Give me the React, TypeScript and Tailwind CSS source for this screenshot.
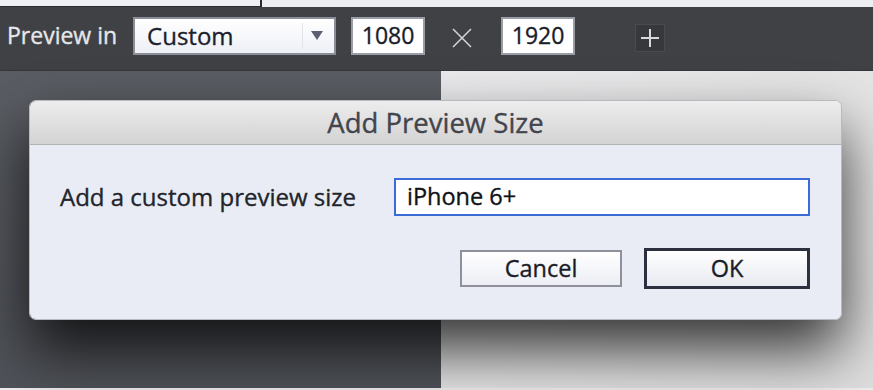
export default function App() {
  return (
    <div className="relative w-[873px] h-[390px] overflow-hidden bg-[#eeeeee] font-['Open_Sans',sans-serif] [-webkit-text-stroke:0.35px_currentColor]">
      {/* top strip */}
      <div className="flex h-[7px]">
        <div className="w-[262px] h-[7px] bg-[#eef0f4] border-r-2 border-b border-[#2a2b2e]" />
        <div className="flex-1 bg-[#eceef2]" />
      </div>

      {/* toolbar */}
      <div className="flex items-center h-[64px] pl-[7px] pb-[6px] bg-[#404145] border-b border-[#35363a]">
        <span className="text-[23px] leading-none text-[#e6e7ea]">Preview in</span>
        <div className="ml-[16px] flex items-center w-[203px] h-[38px] bg-gradient-to-b from-[#ffffff] to-[#eef0f6] border-2 border-[#8a8e98]">
          <span className="pl-[12px] text-[24px] leading-none text-[#1b1f2e]">Custom</span>
          <div className="ml-auto mr-[8px] h-[26px] w-px bg-[#e2e4ea]" />
          <svg className="mr-[11px]" width="12" height="9" viewBox="0 0 12 9">
            <path d="M0 0 L12 0 L6 9 Z" fill="#5b6070" />
          </svg>
        </div>
        <div className="ml-[15px] flex items-center justify-center w-[74px] h-[38px] bg-white border-2 border-[#9a9ca6] text-[23px] leading-none text-[#1a1d2a]">
          1080
        </div>
        <svg className="ml-[27px] mt-[4px]" width="20" height="20" viewBox="0 0 20 20">
          <path d="M1 1 L19 19 M19 1 L1 19" stroke="#d6d7da" strokeWidth="1.5" />
        </svg>
        <div className="ml-[29px] flex items-center justify-center w-[74px] h-[38px] bg-white border-2 border-[#9a9ca6] text-[23px] leading-none text-[#1a1d2a]">
          1920
        </div>
        <div className="ml-[60px] mt-[4px] flex items-center justify-center w-[30px] h-[28px] bg-[#37383b] border border-[#4a4b4f]">
          <svg width="20" height="20" viewBox="0 0 20 20">
            <path d="M10 1 V19 M1 10 H19" stroke="#d9d9db" strokeWidth="2" />
          </svg>
        </div>
      </div>

      {/* work area */}
      <div className="flex h-[317px]">
        <div className="w-[441px] bg-gradient-to-b from-[#5a5d63] to-[#4f5258]" />
        <div className="flex-1 bg-gradient-to-br from-[#ebebed] to-[#dedede]" />
      </div>

      {/* dialog */}
      <div className="absolute left-[29px] top-[100px] w-[813px] h-[220px] rounded-[7px] overflow-hidden border border-[#b8bac0] shadow-[0_30px_60px_rgba(0,0,0,0.78)]">
        <div className="flex items-center justify-center h-[44px] bg-gradient-to-b from-[#ededed] to-[#d3d3d3] border-b border-[#b2b2b2] text-[27.5px] leading-none text-[#43454d]">
          Add Preview Size
        </div>
        <div className="h-[176px] bg-[#e9ecf4] pl-[30px] pr-[31px] pt-[33px]">
          <div className="flex items-center">
            <span className="text-[24px] leading-none text-[#22242c]">Add a custom preview size</span>
            <div className="ml-auto flex items-center w-[416px] h-[38px] bg-white border-2 border-[#3b6cd6] pl-[11px] text-[23.5px] leading-none text-[#111318]">
              iPhone 6+
            </div>
          </div>
          <div className="mt-[32px] flex items-center justify-end gap-[22px]">
            <div className="flex items-center justify-center w-[162px] h-[37px] bg-gradient-to-b from-[#ffffff] to-[#eceef4] border-2 border-[#8e919c] text-[23.5px] leading-none text-[#1a1d28]">
              Cancel
            </div>
            <div className="flex items-center justify-center w-[166px] h-[41px] bg-gradient-to-b from-[#ffffff] to-[#e8eaf1] border-[3px] border-[#2b2f3e] text-[23.5px] leading-none text-[#1a1d28]">
              OK
            </div>
          </div>
        </div>
      </div>
    </div>
  );
}
